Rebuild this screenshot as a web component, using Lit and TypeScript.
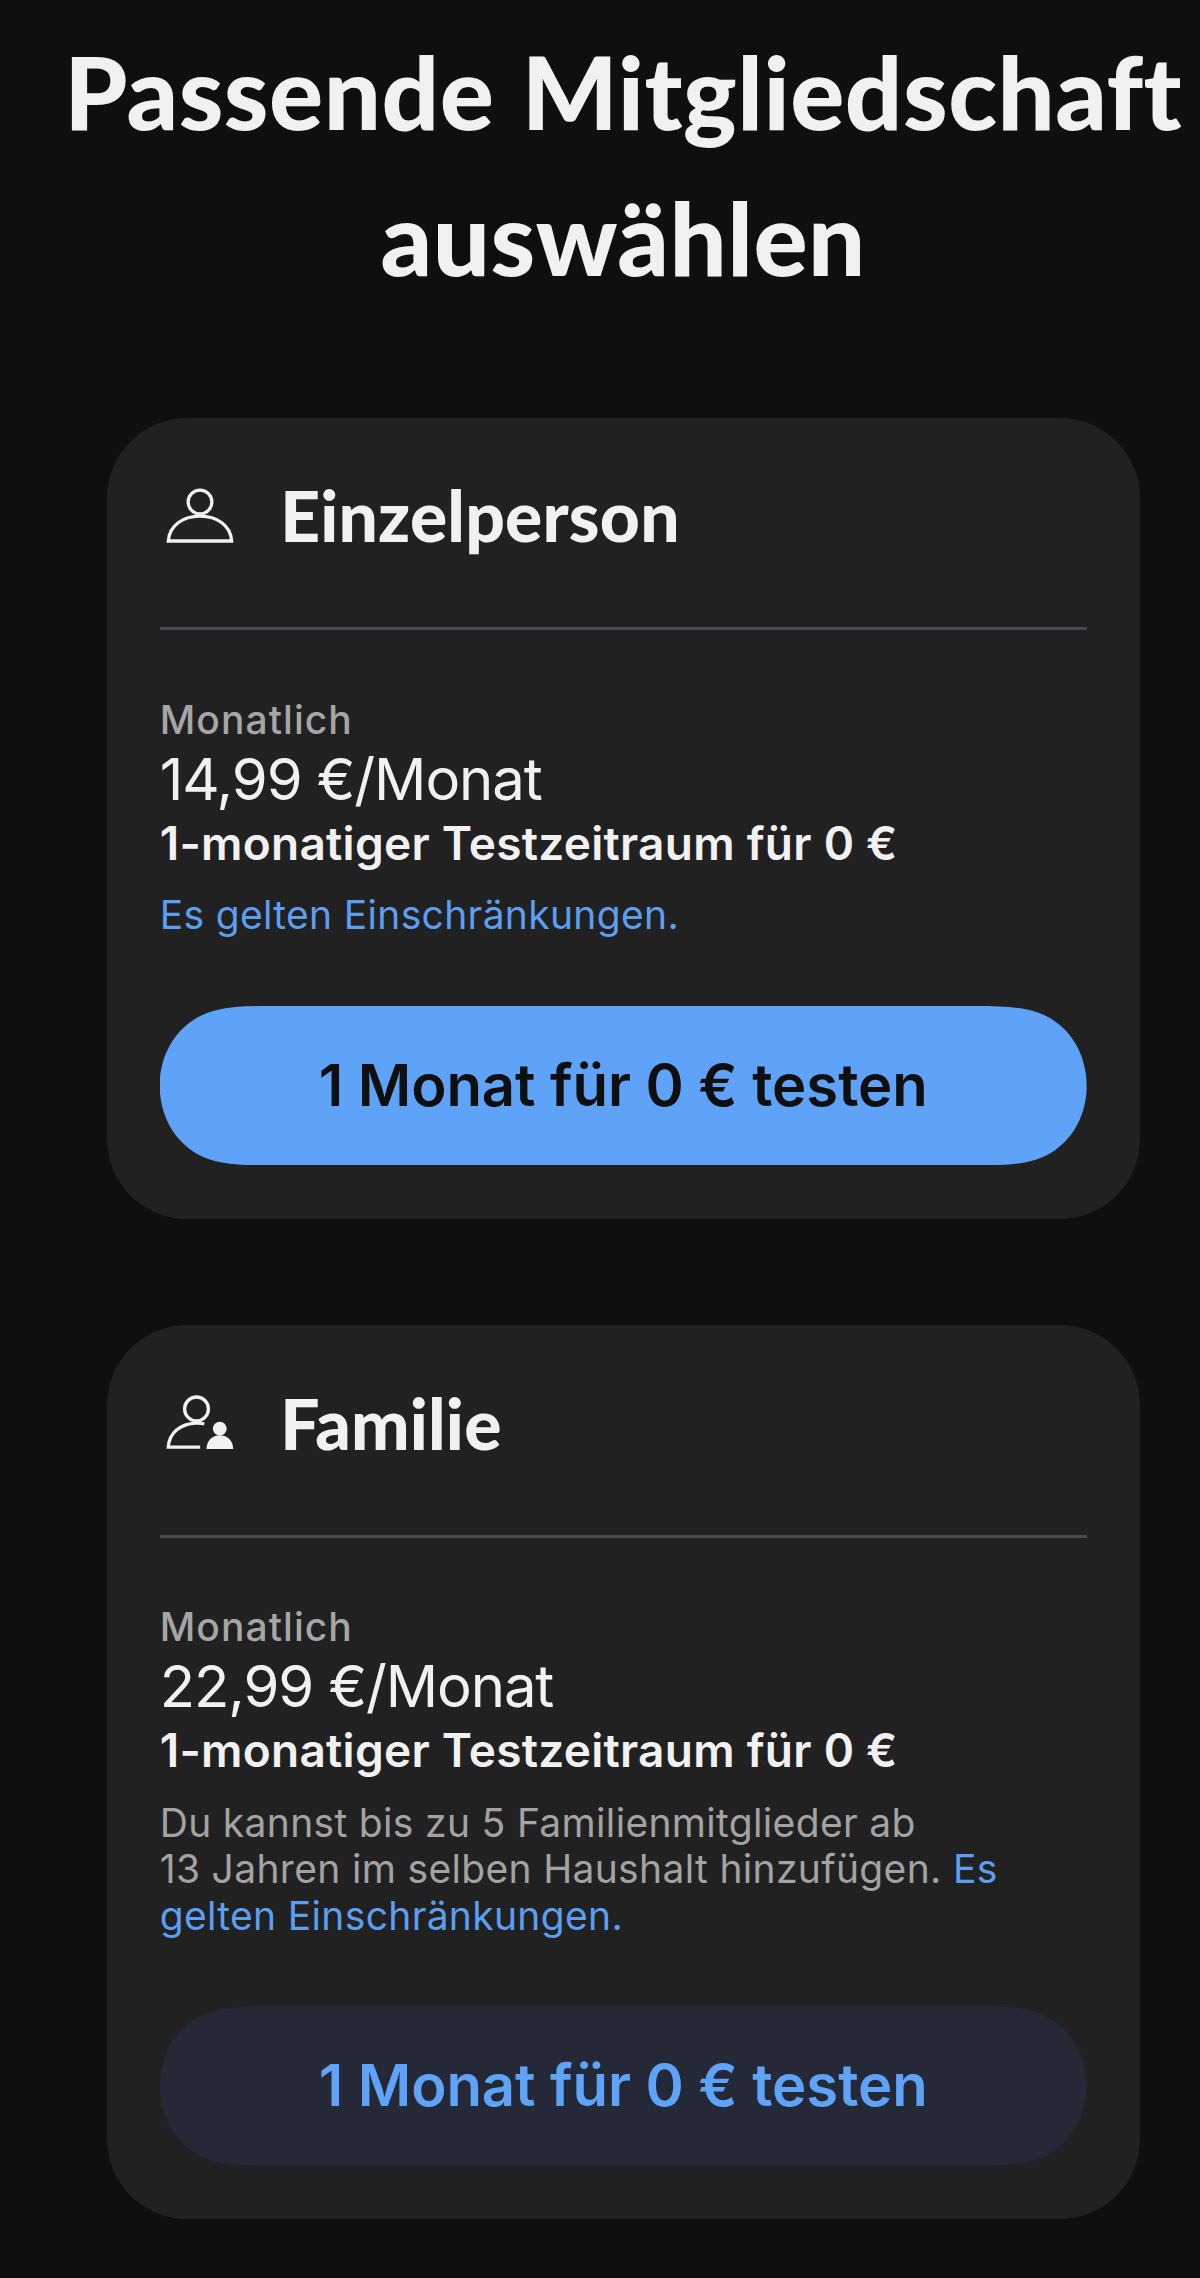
import { LitElement, html, svg, css, nothing } from "lit";
import { customElement, property } from "lit/decorators.js";
import { classMap } from "lit/directives/class-map.js";

interface Plan {
  icon: "person" | "family";
  name: string;
  price: string;
  note: string[];
  link: string[];
  primary: boolean;
}

const PLANS: Plan[] = [
  {
    icon: "person",
    name: "Einzelperson",
    price: "14,99 €/Monat",
    note: [],
    link: ["Es gelten Einschränkungen."],
    primary: true,
  },
  {
    icon: "family",
    name: "Familie",
    price: "22,99 €/Monat",
    note: ["Du kannst bis zu 5 Familienmitglieder ab", "13 Jahren im selben Haushalt hinzufügen."],
    link: ["Es", "gelten Einschränkungen."],
    primary: false,
  },
];

const lines = (parts: string[]) => parts.map((p, i) => html`${i ? html`<br />` : nothing}${p}`);

const ICONS = {
  person: svg`
    <circle class="line" cx="40" cy="25" r="11.9" />
    <path class="line" d="M8.3 64C9.3 48.5 23 39.2 40 39.2S70.7 48.5 71.7 64Z" />`,
  family: svg`
    <circle class="line" cx="36.5" cy="24.9" r="11.9" />
    <path class="line" d="M44.3 39.8C41.8 39.1 38.8 39 36 39.1C20 39.8 9.2 49 8.3 63.2H40.2" />
    <circle class="solid" cx="59.8" cy="44.7" r="6.9" />
    <path class="solid" d="M46.5 64.9C46.7 56.8 52 51.3 59.8 51.3S73 56.8 73.2 64.9Z" />`,
};

@customElement("plan-card")
export class PlanCard extends LitElement {
  @property({ attribute: false }) plan!: Plan;

  static styles = css`
    :host {
      display: flex;
      flex-direction: column;
      box-sizing: border-box;
      width: 1033px;
      padding: 0 53px 53.3px;
      border-radius: 80px;
      background: #212121;
      color: #f1f1f1;
      font-family: Inter, "Liberation Sans", sans-serif;
      white-space: nowrap;
    }
    .head {
      display: flex;
      align-items: center;
      gap: 40.5px;
      box-sizing: border-box;
      height: 212.3px;
      padding: 58.8px 0 70.2px;
      border-bottom: 3px solid #454a54;
    }
    .icon {
      width: 80px;
      height: 80px;
      flex: none;
    }
    .line {
      fill: none;
      stroke: #f1f1f1;
      stroke-width: 3.3;
    }
    .solid {
      fill: #f1f1f1;
    }
    .name {
      margin: 0;
      padding-bottom: 3px;
      font: 900 69.5px/72px Lato, sans-serif;
      letter-spacing: 0.2px;
    }
    .period {
      margin-top: 62.4px;
      font-size: 39px;
      font-weight: 500;
      line-height: 54px;
      letter-spacing: 1.05px;
      color: #a6a6a6;
    }
    .price {
      font-size: 58px;
      line-height: 64.4px;
      letter-spacing: -1.1px;
    }
    .trial {
      font-size: 46px;
      font-weight: 600;
      line-height: 64.8px;
      letter-spacing: 0.26px;
    }
    .note {
      margin: 16.6px 0 67px;
      font-size: 39px;
      line-height: 46.5px;
      letter-spacing: 0.33px;
      color: #a3a3a3;
    }
    .link {
      color: #5c9ff2;
      text-decoration: none;
    }
    .button {
      box-sizing: border-box;
      height: 159.5px;
      padding: 0 0 2px;
      border: 0;
      font: 600 58px/1 Inter, "Liberation Sans", sans-serif;
      letter-spacing: -0.05px;
      color: #5ea3f8;
      background: #252937;
      clip-path: path(
        "M0 79.7C0 41 25 9 62 3C76 .6 90 0 112 0H815C837 0 851 .6 865 3C902 9 927 41 927 79.7C927 118.5 902 150.5 865 156.5C851 158.9 837 159.5 815 159.5H112C90 159.5 76 158.9 62 156.5C25 150.5 0 118.5 0 79.7Z"
      );
    }
    .primary {
      color: #0f0f0f;
      background: #5ea3f8;
    }
  `;

  render() {
    const { icon, name, price, note, link, primary } = this.plan;
    return html`
      <div class="head">
        <svg class="icon" viewBox="0 0 80 80" aria-hidden="true">${ICONS[icon]}</svg>
        <h2 class="name">${name}</h2>
      </div>
      <div class="period">Monatlich</div>
      <div class="price">${price}</div>
      <div class="trial">1-monatiger Testzeitraum für 0 €</div>
      <div class="note">${lines(note)}${note.length ? " " : nothing}<a class="link">${lines(link)}</a></div>
      <button class=${classMap({ button: true, primary })}>1 Monat für 0 € testen</button>
    `;
  }
}

@customElement("app-root")
export class AppRoot extends LitElement {
  static styles = css`
    :host {
      display: flex;
      flex-direction: column;
      align-items: center;
      gap: 106.6px;
      box-sizing: border-box;
      height: 2278px;
      padding: 17.5px 0 0 46.4px;
      overflow: hidden;
      background: #0f0f0f;
    }
    .title {
      margin: 0 0 0.9px;
      color: #f1f1f1;
      font: 900 101px/146.5px Lato, sans-serif;
      letter-spacing: 0.5px;
      word-spacing: 3px;
      text-align: center;
      white-space: nowrap;
    }
  `;

  render() {
    return html`
      <h1 class="title">Passende Mitgliedschaft<br />auswählen</h1>
      ${PLANS.map((plan) => html`<plan-card .plan=${plan}></plan-card>`)}
    `;
  }
}
